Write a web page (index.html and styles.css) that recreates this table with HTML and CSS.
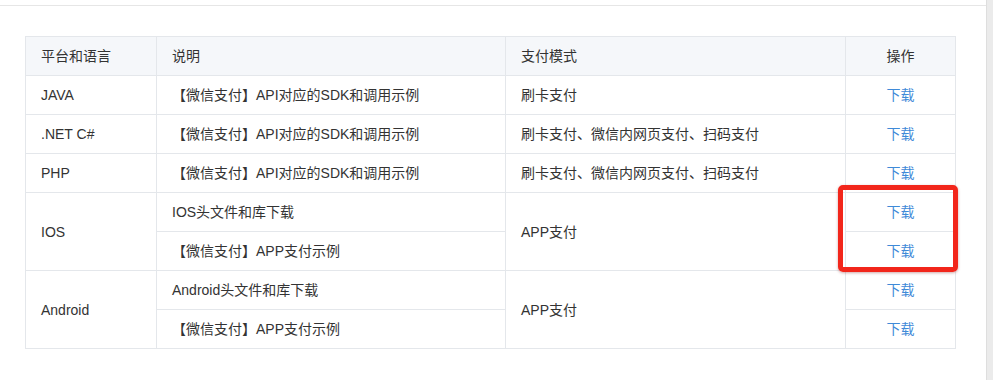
FILE: index.html
```html
<!DOCTYPE html>
<html lang="zh-CN">
<head>
<meta charset="utf-8">
<title>SDK下载</title>
<link rel="stylesheet" href="styles.css">
</head>
<body>
<div class="page">
  <div class="main">
    <div class="topbar"></div>
    <div class="content">
      <div class="table-wrap">
        <table class="sdk">
          <colgroup>
            <col class="c1"><col class="c2"><col class="c3"><col class="c4">
          </colgroup>
          <thead>
            <tr><th>平台和语言</th><th>说明</th><th>支付模式</th><th class="op">操作</th></tr>
          </thead>
          <tbody>
            <tr><td>JAVA</td><td>【微信支付】API对应的SDK和调用示例</td><td>刷卡支付</td><td class="op"><a href="#">下载</a></td></tr>
            <tr><td>.NET C#</td><td>【微信支付】API对应的SDK和调用示例</td><td>刷卡支付、微信内网页支付、扫码支付</td><td class="op"><a href="#">下载</a></td></tr>
            <tr><td>PHP</td><td>【微信支付】API对应的SDK和调用示例</td><td>刷卡支付、微信内网页支付、扫码支付</td><td class="op"><a href="#">下载</a></td></tr>
            <tr><td rowspan="2">IOS</td><td>IOS头文件和库下载</td><td rowspan="2">APP支付</td><td class="op"><a href="#">下载</a></td></tr>
            <tr><td>【微信支付】APP支付示例</td><td class="op"><a href="#">下载</a></td></tr>
            <tr><td rowspan="2">Android</td><td>Android头文件和库下载</td><td rowspan="2">APP支付</td><td class="op"><a href="#">下载</a></td></tr>
            <tr><td>【微信支付】APP支付示例</td><td class="op"><a href="#">下载</a></td></tr>
          </tbody>
        </table>
        <div class="highlight"></div>
      </div>
    </div>
  </div>
  <div class="scrollbar"></div>
</div>
</body>
</html>
```

FILE: styles.css
```css
html, body {
  margin: 0;
  padding: 0;
  background: #ffffff;
}
body {
  font-family: "Liberation Sans", "Noto Sans CJK SC", sans-serif;
  font-size: 14px;
  color: #333333;
}
.page {
  display: flex;
  height: 380px;
  overflow: hidden;
}
.main {
  flex: 1;
  min-width: 0;
}
.topbar {
  height: 5px;
  border-bottom: 1px solid #e6e6e6;
}
.content {
  padding: 30px 0 0 25px;
}
.table-wrap {
  position: relative;
  width: 930px;
}
.sdk {
  border-collapse: collapse;
  table-layout: fixed;
  width: 930px;
}
.c1 { width: 131px; }
.c2 { width: 349px; }
.c3 { width: 340px; }
.c4 { width: 110px; }
.sdk th, .sdk td {
  border: 1px solid #e4e7eb;
  padding: 0 15px;
  height: 38px;
  line-height: 38px;
  text-align: left;
  font-weight: normal;
  white-space: nowrap;
  vertical-align: middle;
}
.sdk th {
  background: #f5f7fa;
  color: #333333;
}
.sdk .op {
  text-align: center;
}
.sdk a {
  color: #3f8ad8;
  text-decoration: none;
}
.highlight {
  position: absolute;
  left: 813px;
  top: 149px;
  width: 110px;
  height: 77px;
  border: 5px solid #f2261b;
  border-radius: 5px;
  box-shadow: 0 1px 3px rgba(120, 0, 0, 0.35);
}
.scrollbar {
  width: 6px;
  flex: none;
  background: #ebebeb;
  border-left: 1px solid #dedede;
}
```
